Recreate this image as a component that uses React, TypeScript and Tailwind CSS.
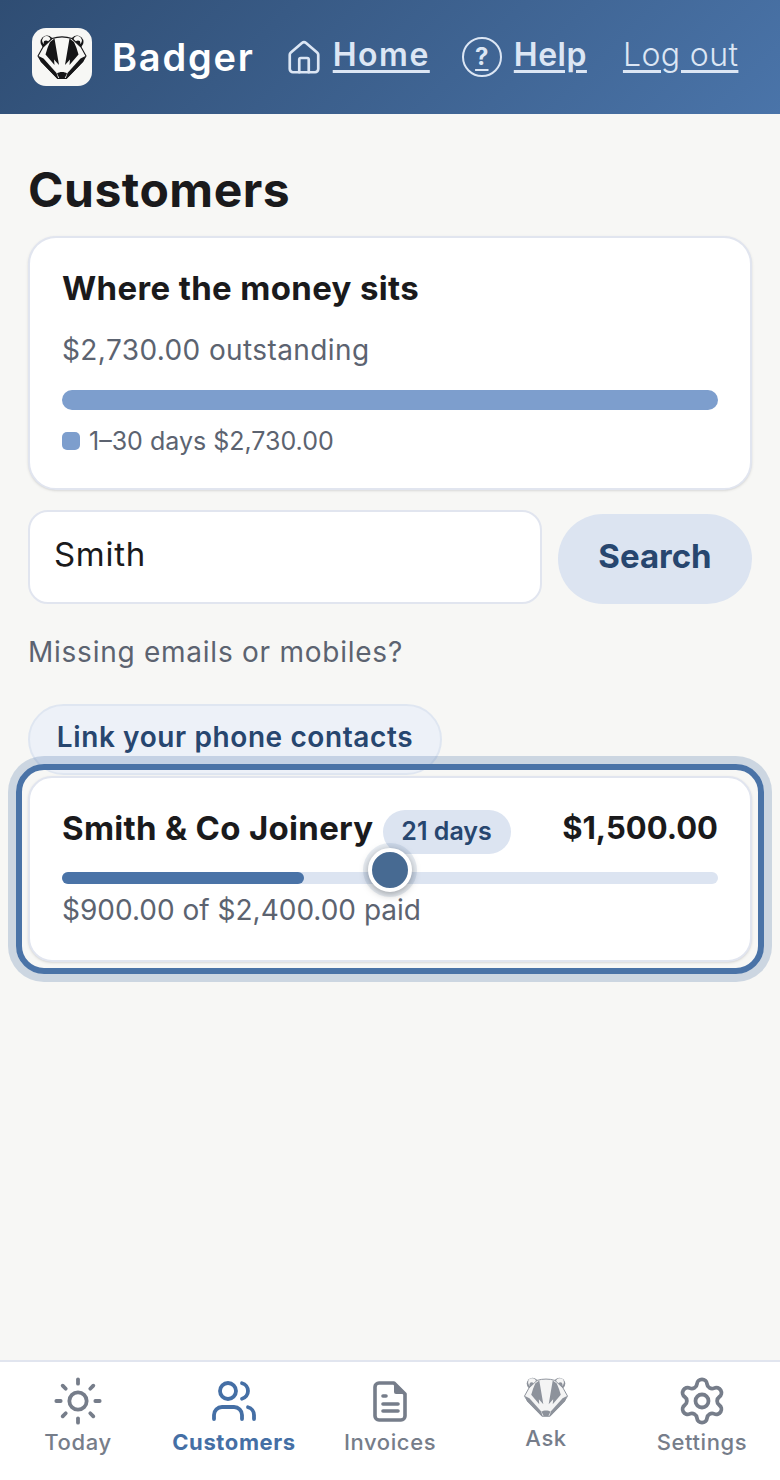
import React from "react";
import { House, Sun, Users, Settings } from "lucide-react";

const BadgerFace = ({ dark, light, className }: { dark: string; light: string; className?: string }) => (
  <svg viewBox="0 0 60 58" className={className}>
    {/* ears */}
    <circle cx="15" cy="14" r="6.5" fill={dark} />
    <circle cx="14.5" cy="12.5" r="4.4" fill={light} />
    <circle cx="14" cy="15" r="2.4" fill={dark} />
    <circle cx="45" cy="14" r="6.5" fill={dark} />
    <circle cx="45.5" cy="12.5" r="4.4" fill={light} />
    <circle cx="46" cy="15" r="2.4" fill={dark} />
    {/* head */}
    <path
      d="M20 10.5 C26 8.5 34 8.5 40 10.5 L49 19 L54 28 L51 33 L34 50.5 L26 50.5 L9 33 L6 28 L11 19Z"
      fill={light}
      stroke={dark}
      strokeWidth="1.1"
      strokeLinejoin="round"
    />
    {/* stripes */}
    <path d="M22.5 10.5 L27 37 L22 31.5 L22.5 37 L13.5 26.5 L15.5 20 L18 14Z" fill={dark} />
    <path d="M37.5 10.5 L33 37 L38 31.5 L37.5 37 L46.5 26.5 L44.5 20 L42 14Z" fill={dark} />
    {/* cheeks */}
    <path d="M6.5 28 L11.5 30.5 L24.5 45 L26.5 51 L25 50.5 L9 34Z" fill={dark} />
    <path d="M53.5 28 L48.5 30.5 L35.5 45 L33.5 51 L35 50.5 L51 34Z" fill={dark} />
    {/* nose */}
    <path d="M25 45.5 C27 43.5 33 43.5 35 45.5 L32.5 50.5 L27.5 50.5Z" fill={dark} />
  </svg>
);

const NavItem = ({ label, active, raised, children }: { label: string; active?: boolean; raised?: boolean; children: React.ReactNode }) => (
  <a className={`flex w-[156px] flex-col items-center ${active ? "text-[#456fa5]" : "text-[#767d8a]"}`}>
    <span className="flex h-[52px] items-center justify-center">{children}</span>
    <span className={`text-[22px] leading-[28px] tracking-[0.6px] ${active ? "font-bold" : "font-medium"} ${raised ? "-mt-[3px]" : "mt-[1px]"}`}>{label}</span>
  </a>
);

export default function App() {
  return (
    <div className="flex min-h-[1480px] flex-col bg-[#f7f7f5] font-['Inter','Liberation_Sans',sans-serif] text-[#1a1a1c]">
      {/* Header */}
      <header className="flex h-[114px] items-center bg-[linear-gradient(135deg,#2f4d73,#4a74a9)] pl-8 text-[#dce6f4]">
        <div className="h-[58px] w-[60px] rounded-[14px] bg-[#f7f7f5]">
          <BadgerFace dark="#151517" light="#f7f7f5" className="h-[58px] w-[60px]" />
        </div>
        <span className="ml-[20px] text-[38px] font-semibold tracking-[1.8px] text-white">Badger</span>
        <a className="ml-[30px] flex items-center">
          <House size={38} strokeWidth={1.7} className="mt-[2px]" />
          <span className="-mt-1 ml-[10px] text-[32px] font-semibold tracking-[1.5px] underline underline-offset-4">Home</span>
        </a>
        <a className="ml-[32px] flex items-center">
          <span className="flex h-[40px] w-[40px] items-center justify-center rounded-full border-2 border-[#dce6f4] text-[24px] font-bold underline underline-offset-4">?</span>
          <span className="-mt-1 ml-[12px] text-[32px] font-semibold tracking-[0.5px] underline underline-offset-4">Help</span>
        </a>
        <a className="-mt-1 ml-[36px] text-[32px] font-light tracking-[0.4px] underline underline-offset-4">Log out</a>
      </header>

      {/* Main */}
      <main className="flex flex-1 flex-col px-7">
        <h1 className="mt-[48px] h-[56px] text-[48px] font-bold leading-[56px] tracking-[0.5px]">Customers</h1>
        <section className="mt-[18px] h-[254px] rounded-[28px] border-2 border-[#e1e5ef] bg-white px-[32px] pt-[31px] shadow-sm">
          <h2 className="text-[33px] font-bold leading-[38px] tracking-[0.35px]">Where the money sits</h2>
          <p className="mt-[23px] text-[28px] leading-[40px] tracking-[0.4px] text-[#5c6370]">$2,730.00 outstanding</p>
          <div className="mt-[20px] h-[20px] rounded-[10px] bg-[#7d9ecd]" />
          <div className="mt-[17px] flex items-center text-[25px] leading-[28px] text-[#5c6370]">
            <span className="h-[18px] w-[18px] rounded-[5px] bg-[#7d9ecd]" />
            <span className="ml-[9px]">1–30 days $2,730.00</span>
          </div>
        </section>

        <div className="mt-5 flex items-end gap-4">
          <input
            readOnly
            value="Smith"
            className="h-[94px] w-[514px] rounded-[20px] border-2 border-[#e1e5ef] bg-white px-6 pb-[6px] text-[33px] tracking-[0.7px] outline-none"
          />
          <button className="h-[90px] w-[194px] rounded-full bg-[#dce4f1] pb-[4px] text-[33px] font-bold text-[#27466f]">Search</button>
        </div>

        <p className="mt-[28px] text-[28px] leading-[40px] tracking-[0.75px] text-[#5c6370]">Missing emails or mobiles?</p>

        <a className="mt-[32px] flex h-[71px] w-[414px] items-center justify-center rounded-[36px] border-2 border-[#dfe6f1] bg-[#edf1f8] pb-[6px] text-[28px] font-semibold tracking-[0.6px] text-[#27466f]">
          Link your phone contacts
        </a>

        {/* Selected customer, highlighted by the walkthrough */}
        <div className="relative mt-[1px]">
          <div className="h-[186px] rounded-[24px] border-2 border-[#e1e5ef] bg-white px-[32px] pt-[31px] shadow-sm">
            <div className="flex items-start justify-between">
              <div className="flex items-start">
                <span className="text-[33px] font-bold leading-[38px] tracking-[0.3px]">Smith &amp; Co Joinery</span>
                <span className="ml-[9px] mt-[1px] flex h-[44px] w-[128px] items-center justify-center rounded-[22px] bg-[#dce4f1] text-[25px] font-semibold text-[#27466f]">21 days</span>
              </div>
              <span className="text-[31px] font-bold leading-[38px]">$1,500.00</span>
            </div>
            <div className="mt-[18px] h-[12px] rounded-[6px] bg-[#dce4f1]">
              <div className="h-full w-[242px] rounded-[6px] bg-[#4a73a7]" />
            </div>
            <p className="mt-[6px] text-[28px] leading-[40px] text-[#5c6370]">$900.00 of $2,400.00 paid</p>
          </div>
          <div className="pointer-events-none absolute -inset-x-[12px] -bottom-[12px] -top-[12px] rounded-[28px] border-[6px] border-[#4a73a7] shadow-[0_0_0_8px_rgba(74,115,167,0.25)]" />
          <div className="absolute left-[340px] top-[72px] h-[44px] w-[44px] rounded-full border-4 border-white bg-[#476a92] shadow-[0_2px_8px_rgba(0,0,0,0.35),0_0_0_5px_rgba(74,115,167,0.12)]" />
        </div>
      </main>

      {/* Bottom nav */}
      <nav className="flex h-[120px] items-start border-t-2 border-[#e1e5ef] bg-white pt-[13px]">
        <NavItem label="Today"><Sun size={52} strokeWidth={1.75} /></NavItem>
        <NavItem label="Customers" active><Users size={48} strokeWidth={1.9} /></NavItem>
        <NavItem label="Invoices">
          <svg viewBox="0 0 34 41" className="h-[41px] w-[34px]" fill="none" stroke="currentColor" strokeWidth="3.6" strokeLinecap="round" strokeLinejoin="round">
            <path d="M6 2 H21 L32 13 V35 A4 4 0 0 1 28 39 H6 A4 4 0 0 1 2 35 V6 A4 4 0 0 1 6 2Z" />
            <path d="M21 3 L31 13 H23 A2 2 0 0 1 21 11Z" fill="currentColor" stroke="none" />
            <path d="M10 15 H13 M10 23 H25 M10 30 H25" />
          </svg>
        </NavItem>
        <NavItem label="Ask" raised>
          <BadgerFace dark="#8d929b" light="#f4f4f4" className="mb-[8px] h-[52px] w-[54px]" />
        </NavItem>
        <NavItem label="Settings"><Settings size={52} strokeWidth={1.75} /></NavItem>
      </nav>
    </div>
  );
}
